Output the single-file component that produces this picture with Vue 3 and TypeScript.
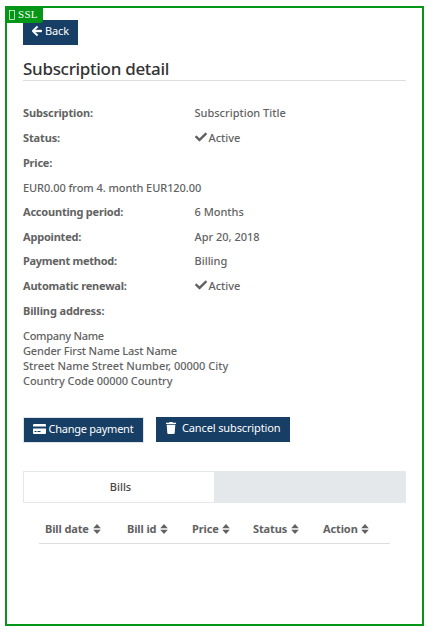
<script setup lang="ts">
interface Detail {
  label: string
  value?: string
  active?: boolean
  key: string
}

const summary: Detail[] = [
  { key: 'subscription', label: 'Subscription:', value: 'Subscription Title' },
  { key: 'status', label: 'Status:', value: 'Active', active: true },
  { key: 'price', label: 'Price:' },
]

const terms: Detail[] = [
  { key: 'period', label: 'Accounting period:', value: '6 Months' },
  { key: 'appointed', label: 'Appointed:', value: 'Apr 20, 2018' },
  { key: 'method', label: 'Payment method:', value: 'Billing' },
  { key: 'renewal', label: 'Automatic renewal:', value: 'Active', active: true },
  { key: 'billing', label: 'Billing address:' },
]

const address: { key: string; text: string }[] = [
  { key: 'company', text: 'Company Name' },
  { key: 'person', text: 'Gender First Name Last Name' },
  { key: 'street', text: 'Street Name Street Number, 00000 City' },
  { key: 'country', text: 'Country Code 00000 Country' },
]

const columns: { key: string; text: string }[] = [
  { key: 'date', text: 'Bill date' },
  { key: 'id', text: 'Bill id' },
  { key: 'cost', text: 'Price' },
  { key: 'state', text: 'Status' },
  { key: 'action', text: 'Action' },
]
</script>

<template>
  <main class="frame">
    <span class="ssl">
      <svg class="lock" viewBox="0 0 6 10"><rect x="0.5" y="0.5" width="5" height="9" /></svg>
      <span>SSL</span>
    </span>

    <button class="btn back">
      <svg class="arrow" viewBox="0 0 448 512"><path d="M257.500 445.100l-22.200 22.200c-9.400 9.400-24.600 9.400-33.900 0L7 273c-9.400-9.400-9.400-24.600 0-33.900L201.400 44.700c9.400-9.400 24.600-9.400 33.900 0l22.200 22.200c9.500 9.500 9.300 25-.4 34.300L136.600 216H424c13.300 0 24 10.700 24 24v32c0 13.300-10.700 24-24 24H136.600l120.500 114.800c9.800 9.300 10 24.800.4 34.300z" /></svg>
      <span>Back</span>
    </button>

    <h1><span>Subscription detail</span></h1>

    <dl class="details">
      <div v-for="row in summary" :key="row.key" class="row" :class="row.key">
        <dt>{{ row.label }}</dt>
        <dd v-if="row.value">
          <svg v-if="row.active" class="check" viewBox="0 0 512 512"><path d="M173.900 439.400l-166.400-166.400c-10-10-10-26.200 0-36.200l36.200-36.200c10-10 26.200-10 36.200 0L192 312.700 432.100 72.600c10-10 26.200-10 36.200 0l36.200 36.200c10 10 10 26.200 0 36.200l-294.400 294.400c-10 10-26.200 10-36.200 0z" /></svg>
          <span>{{ row.value }}</span>
        </dd>
      </div>
      <div class="row total"><span class="amount">EUR0.00 from 4. month EUR120.00</span></div>
      <div v-for="row in terms" :key="row.key" class="row" :class="row.key">
        <dt>{{ row.label }}</dt>
        <dd v-if="row.value">
          <svg v-if="row.active" class="check" viewBox="0 0 512 512"><path d="M173.900 439.400l-166.400-166.400c-10-10-10-26.200 0-36.200l36.200-36.200c10-10 26.200-10 36.200 0L192 312.700 432.100 72.600c10-10 26.200-10 36.200 0l36.200 36.200c10 10 10 26.200 0 36.200l-294.400 294.400c-10 10-26.200 10-36.200 0z" /></svg>
          <span>{{ row.value }}</span>
        </dd>
      </div>
    </dl>

    <address>
      <span v-for="line in address" :key="line.key" :class="line.key">{{ line.text }}</span>
    </address>

    <div class="actions">
      <button class="btn change">
        <svg class="card" viewBox="0 0 13 10"><path d="M1 0h11q1 0 1 1v1.500H0V1q0-1 1-1zM0 4.500h13V9q0 1-1 1H1q-1 0-1-1zM1.500 7v1h2V7zM4.500 7v1h3V7z" fill-rule="evenodd" /></svg>
        <span>Change payment</span>
      </button>
      <button class="btn cancel">
        <svg class="trash" viewBox="0 0 10 12"><path d="M3.500 0h3l.5.700h3V2H0V.700h3zM.7 2.700h8.600l-.6 8.300q-.1 1-1 1H2.300q-.9 0-1-1z" /></svg>
        <span>Cancel subscription</span>
      </button>
    </div>

    <nav class="tabs"><button class="tab"><span>Bills</span></button></nav>

    <div class="bills">
      <div v-for="column in columns" :key="column.key" class="column" :class="column.key">
        <span>{{ column.text }}</span>
        <svg class="sort" viewBox="0 0 8 10"><path d="M4 0L7.800 4.200H.2zM.2 5.800h7.600L4 10z" /></svg>
      </div>
    </div>
  </main>
</template>

<style>
body {
  background: #fff;
}
</style>

<style scoped>
.frame {
  position: relative;
  box-sizing: border-box;
  width: 419px;
  height: 620px;
  margin: 6px 0 0 5px;
  padding: 12px 16px;
  border: 2px solid #049616;
  color: #626262;
  font: 500 11px/15px "Noto Sans", "Open Sans", sans-serif;
  white-space: nowrap;
  display: flow-root;
}

svg {
  flex: none;
  fill: currentColor;
}

.ssl {
  position: absolute;
  top: 0;
  left: 0;
  display: flex;
  align-items: center;
  gap: 3px;
  box-sizing: border-box;
  width: 36px;
  height: 15px;
  padding: 0 0 2px 2px;
  border-radius: 0 0 3px;
  background: #049616;
  color: #fff;
  font: 400 11px/13px "Liberation Serif", serif;
  letter-spacing: 0.3px;
}

.lock {
  width: 6px;
  height: 10px;
  fill: none;
  stroke: #fff;
  stroke-width: 0.7;
}

.btn {
  display: flex;
  align-items: center;
  box-sizing: border-box;
  height: 25px;
  margin: 0;
  padding: 0 0 3px 9px;
  border: 0;
  background: #173e64;
  color: #fff;
  font: inherit;
  font-weight: 400;
}

.back {
  width: 55px;
  padding-bottom: 4px;
  gap: 3px;
  letter-spacing: -0.15px;
}

.arrow {
  width: 10px;
  height: 12px;
  stroke: currentColor;
  stroke-width: 20;
}

h1 {
  height: 22px;
  margin: 13px 0 0;
  border-bottom: 1px solid #dedede;
  color: #333;
  font-size: 17px;
  font-weight: 500;
  line-height: 22px;
  letter-spacing: -0.3px;
}

.details {
  margin: 19.3px 0 0;
}

.row {
  display: grid;
  grid-template-columns: 171.5px 1fr;
  align-items: center;
  height: 24.7px;
}

.total {
  box-sizing: border-box;
  padding-top: 1px;
}

dt {
  font-weight: 700;
  letter-spacing: -0.21px;
}

.subscription dt,
.status dt {
  letter-spacing: -0.14px;
}

.method dt {
  letter-spacing: -0.28px;
}

.billing dt {
  letter-spacing: -0.12px;
}

dd {
  display: flex;
  align-items: center;
  gap: 2px;
  margin: 0;
}

.check {
  width: 12px;
  height: 12px;
}

.amount {
  letter-spacing: -0.06px;
}

address {
  display: flex;
  flex-direction: column;
  align-items: flex-start;
  margin-top: 5.7px;
  font-style: normal;
}

.company {
  letter-spacing: -0.3px;
}

.person {
  letter-spacing: -0.16px;
}

.country {
  letter-spacing: -0.07px;
}

.actions {
  display: flex;
  gap: 12px;
  margin-top: 29px;
}

.change {
  width: 121px;
  height: 26px;
  padding-bottom: 3px;
  border: 1px solid #dce3ea;
  gap: 2.5px;
  letter-spacing: -0.25px;
}

.card {
  width: 13px;
  height: 10px;
}

.cancel {
  width: 134px;
  padding-bottom: 4px;
  padding-left: 10px;
  gap: 6px;
  letter-spacing: -0.13px;
}

.trash {
  width: 10px;
  height: 12px;
}

.tabs {
  height: 32px;
  margin-top: 28px;
  background: #e4e8eb;
}

.tab {
  display: grid;
  place-items: center;
  width: 192px;
  height: 32px;
  padding: 0 0 1px 3px;
  border: 1px solid #e4e8eb;
  background: #fff;
  color: #444;
  font: inherit;
}

.bills {
  display: grid;
  grid-template-columns: 82px 65px 61px 70px 1fr;
  align-items: center;
  height: 40px;
  margin: 0 16px;
  padding: 0 0 0 6px;
  border-bottom: 1px solid #dedede;
  font-weight: 700;
  letter-spacing: -0.12px;
}

.column {
  display: flex;
  align-items: center;
  gap: 4px;
  padding-top: 11px;
}

.cost,
.action {
  gap: 3px;
}

.sort {
  width: 8px;
  height: 10px;
}
</style>
